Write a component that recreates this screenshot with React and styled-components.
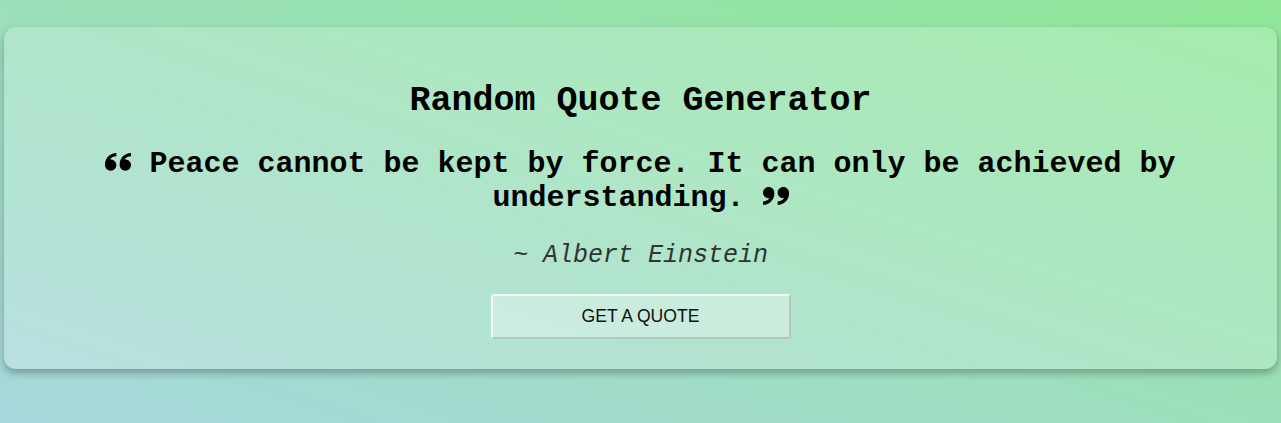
import React from "react";
import styled, { createGlobalStyle } from "styled-components";
import { ImQuotesLeft, ImQuotesRight } from "react-icons/im";

const Global = createGlobalStyle`
  html, body { margin: 0; padding: 0; }
  body {
    min-height: 100vh;
    background: linear-gradient(to top right, #a8d8de, #8fe797);
    font-family: "Courier New", "Liberation Mono", monospace;
  }
`;

const Page = styled.div`
  min-height: 100vh;
  box-sizing: border-box;
  padding: 27px 4px;
`;

const Card = styled.div`
  background: rgba(255, 255, 255, 0.2);
  border-radius: 12px;
  box-shadow: 0 4px 8px rgba(0, 0, 0, 0.3);
  padding: 54px 40px 30px;
  display: flex;
  flex-direction: column;
  align-items: center;
  text-align: center;
`;

const Title = styled.h1`
  margin: 0;
  font-size: 35px;
  line-height: 40px;
  font-weight: bold;
  color: #000;
`;

const Quote = styled.p`
  margin: 26px 0 0;
  font-size: 30px;
  line-height: 34px;
  font-weight: bold;
  color: #000;

  svg {
    width: 26px;
    height: 26px;
    vertical-align: -2px;
  }
`;

const Author = styled.p`
  margin: 26px 0 0;
  font-size: 25px;
  line-height: 30px;
  font-style: italic;
  color: #333;
`;

const Button = styled.button`
  margin-top: 23px;
  width: 300px;
  height: 45px;
  box-sizing: border-box;
  background: rgba(255, 255, 255, 0.32);
  border: 2px solid;
  border-color: rgba(255, 255, 255, 0.75) #b5c6be #b5c6be rgba(255, 255, 255, 0.75);
  border-radius: 3px;
  font-family: Arial, "Liberation Sans", sans-serif;
  font-size: 17.6px;
  color: #111;
  cursor: pointer;
`;

export default function App() {
  return (
    <>
      <Global />
      <Page>
        <Card>
          <Title>Random Quote Generator</Title>
          <Quote>
            <ImQuotesLeft /> Peace cannot be kept by force. It can only be achieved by
            understanding. <ImQuotesRight />
          </Quote>
          <Author>~ Albert Einstein</Author>
          <Button>GET A QUOTE</Button>
        </Card>
      </Page>
    </>
  );
}
